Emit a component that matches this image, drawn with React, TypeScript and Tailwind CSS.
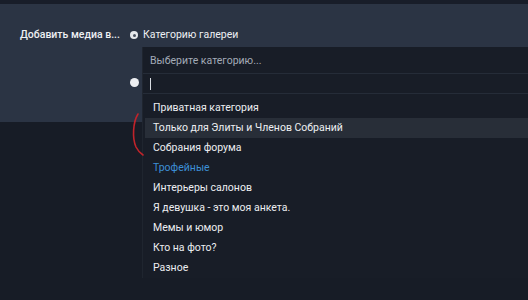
import React from 'react';

const categories = [
  { name: 'Приватная категория' },
  { name: 'Только для Элиты и Членов Собраний', active: true },
  { name: 'Собрания форума' },
  { name: 'Трофейные', link: true },
  { name: 'Интерьеры салонов' },
  { name: 'Я девушка - это моя анкета.' },
  { name: 'Мемы и юмор' },
  { name: 'Кто на фото?' },
  { name: 'Разное' },
];

const CategoryDropdown: React.FC = () => (
  <div className="absolute left-[142px] top-[47px] w-[400px] h-[231px] bg-[#181d27] border-l border-[#1f252f]">
    <div className="h-[27px] flex items-center pl-[7px] pt-[1px] text-[10.5px] text-[#a3abb7] border-b border-[#252c38]">
      Выберите категорию...
    </div>
    <div className="h-[20px] flex items-center pl-[7px] border-b border-[#252c38]">
      <span className="block w-px h-[12px] bg-[#d8dce2]" />
    </div>
    <ul className="pt-[4px]">
      {categories.map((c) => (
        <li
          key={c.name}
          className={`h-[20px] flex items-center pl-[8px] ml-[2px] text-[10.5px] ${
            c.active ? 'bg-[#282e38]' : ''
          } ${c.link ? 'text-[#3d8fd6]' : 'text-[#eceef1]'}`}
        >
          {c.name}
        </li>
      ))}
    </ul>
  </div>
);

export default function App() {
  return (
    <div
      className="relative w-[528px] h-[300px] overflow-hidden bg-[#171c26]"
      style={{ fontFamily: 'Roboto, "Liberation Sans", Arial, sans-serif' }}
    >
      <div className="h-[4px] bg-[#181d29]" />
      <div className="h-[118px] bg-[#2b3444] flex pt-[24px]">
        <div className="w-[130px] pl-[20px] text-[10.5px] font-medium text-[#eef0f3] leading-[14px]">
          Добавить медиа в...
        </div>
        <div className="flex flex-col">
          <label className="flex items-center gap-[5px] text-[10.5px] text-[#eef0f3] leading-[14px]">
            <span className="w-[8px] h-[8px] rounded-full bg-[#e6e8ec] flex items-center justify-center">
              <span className="w-[3px] h-[3px] rounded-full bg-[#4a5260]" />
            </span>
            Категорию галереи
          </label>
          <span className="mt-[36px] w-[9px] h-[9px] rounded-full bg-[#eceef1]" />
        </div>
      </div>
      <CategoryDropdown />
      <svg className="absolute left-[128px] top-[110px]" width="20" height="50" viewBox="0 0 20 50">
        <path d="M10 4 C 5 12, 4 28, 8 37 C 10 41, 12 43, 15 45" fill="none" stroke="#c0242b" strokeWidth="1.6" strokeLinecap="round" />
      </svg>
    </div>
  );
}
